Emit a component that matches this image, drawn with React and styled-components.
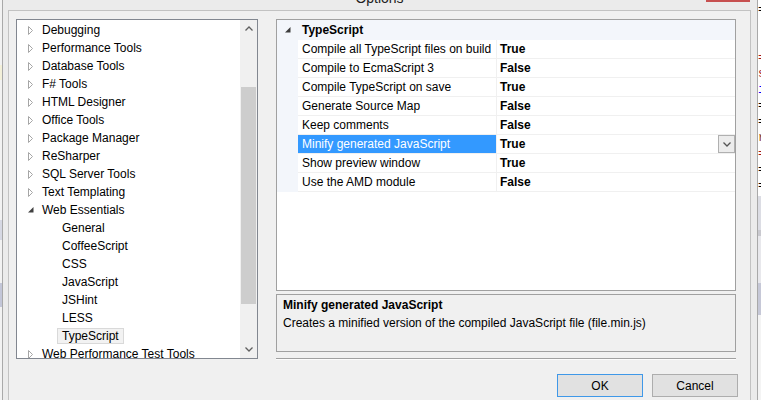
import React from "react";
import styled, { createGlobalStyle } from "styled-components";

const GlobalStyle = createGlobalStyle`
  html, body {
    margin: 0;
    padding: 0;
  }
  body {
    width: 761px;
    height: 400px;
    overflow: hidden;
    background: #f0f0f0;
    color: #000;
    font-family: "Liberation Sans", Arial, sans-serif;
    font-size: 12px;
  }
`;

const Screen = styled.div`
  display: flex;
  width: 761px;
  height: 400px;
  overflow: hidden;
`;

const Backdrop = styled.div`
  width: 2px;
  flex: none;
  background: linear-gradient(
    to bottom,
    #f2f2f2 0, #f2f2f2 65px,
    #f3f0d9 65px, #f3f0d9 80px,
    #f2f2f2 80px, #f2f2f2 220px,
    #d6d8e3 220px, #d6d8e3 240px,
    #f2f2f2 240px, #f2f2f2 283px,
    #c3c6d8 283px, #c3c6d8 307px,
    #f2f2f2 307px
  );
`;

const Editor = styled.div`
  width: 3px;
  flex: none;
  display: flex;
  flex-direction: column;
  padding-top: 2px;
  overflow: hidden;
  background: linear-gradient(
    to bottom,
    #ffffff 0, #ffffff 196px,
    #dcdde4 196px, #dcdde4 230px,
    #c9c9cf 230px, #c9c9cf 236px,
    #e8e8ec 236px, #e8e8ec 283px,
    #c6c8d7 283px, #c6c8d7 315px,
    #f4f4f4 315px
  );
`;

const CodeLine = styled.div`
  height: 16px;
  line-height: 16px;
  font-family: "Liberation Mono", monospace;
  font-size: 12px;
  white-space: pre;
  color: ${p => p.color || "#000"};
`;

const Window = styled.div`
  width: 756px;
  flex: none;
  box-sizing: border-box;
  display: flex;
  flex-direction: column;
  border-left: 1px solid #a9a9a9;
  border-right: 1px solid #a9a9a9;
  background: #ebebeb;
  padding: 0 6px 0 5px;
`;

const TitleBar = styled.div`
  height: 10px;
  flex: none;
  display: grid;
  grid-template-columns: 1fr auto 1fr;
  grid-template-rows: 10px;
  align-items: end;
  overflow: hidden;
`;

const Title = styled.div`
  grid-column: 2;
  font-size: 14px;
  line-height: 16px;
  margin-bottom: 4px;
  color: #222;
`;

const CloseButton = styled.div`
  grid-column: 3;
  justify-self: end;
  align-self: start;
  width: 44px;
  height: 2px;
  margin-right: 1px;
  background: #c75050;
`;

const Client = styled.div`
  flex: 1;
  display: flex;
  flex-direction: column;
  border: 1px solid #c2c2c2;
  border-bottom: none;
  background: #f0f0f0;
  padding: 8px 14px 0 7px;
  overflow: hidden;
`;

const Main = styled.div`
  display: flex;
  align-items: flex-start;
  gap: 18px;
`;

/* ---------- tree ---------- */

const Tree = styled.div`
  width: 242px;
  height: 340px;
  box-sizing: border-box;
  flex: none;
  display: flex;
  border: 1px solid #828790;
  background: #fff;
  overflow: hidden;
`;

const TreeList = styled.div`
  flex: 1;
  padding-top: 1px;
  overflow: hidden;
`;

const TreeRow = styled.div`
  display: flex;
  align-items: center;
  height: 18px;
  padding-left: ${p => 11 + p.level * 20}px;
  white-space: nowrap;
`;

const Expander = styled.span`
  width: 14px;
  flex: none;
  display: flex;
  align-items: center;
`;

const TreeLabel = styled.span`
  line-height: 14px;
  ${p =>
    p.selected &&
    `
    margin-left: -5px;
    padding: 0 4px;
    height: 16px;
    box-sizing: border-box;
    border: 1px solid #d9d9d9;
    background: #f2f2f2;
  `}
`;

const Scrollbar = styled.div`
  width: 17px;
  flex: none;
  display: flex;
  flex-direction: column;
  background: #f0f0f0;
`;

const ScrollButton = styled.div`
  height: 17px;
  flex: none;
  display: flex;
  align-items: center;
  justify-content: center;
`;

const ScrollTrack = styled.div`
  flex: 1;
  padding-top: 50px;
`;

const Thumb = styled.div`
  height: 217px;
  margin: 0 1px;
  background: #cdcdcd;
`;

/* ---------- property grid ---------- */

const RightColumn = styled.div`
  width: 460px;
  flex: none;
  display: flex;
  flex-direction: column;
`;

const Grid = styled.div`
  height: 272px;
  box-sizing: border-box;
  border: 1px solid #a0a0a0;
  background: #fff;
`;

const CategoryRow = styled.div`
  display: flex;
  align-items: center;
  height: 20px;
  background: #f3f6fb;
  font-weight: bold;
`;

const CategoryGlyph = styled.span`
  width: 21px;
  flex: none;
  box-sizing: border-box;
  padding-left: 8px;
  display: flex;
  align-items: center;
`;

const CategoryLabel = styled.span`
  padding-left: 4px;
`;

const PropRow = styled.div`
  display: grid;
  grid-template-columns: 21px 199px 1fr;
  height: 19px;
`;

const Gutter = styled.div`
  background: #f3f6fb;
`;

const NameCell = styled.div`
  display: flex;
  align-items: center;
  padding-left: 4px;
  white-space: nowrap;
  overflow: hidden;
  border-right: 1px solid #f0f0f0;
  border-bottom: 1px solid #f0f0f0;
  background: ${p => (p.selected ? "#3399ff" : "#fff")};
  color: ${p => (p.selected ? "#fff" : "#000")};
`;

const ValueCell = styled.div`
  display: flex;
  align-items: center;
  justify-content: space-between;
  padding-left: 3px;
  font-weight: bold;
  border-bottom: 1px solid #f0f0f0;
`;

const DropButton = styled.div`
  width: 17px;
  height: 18px;
  box-sizing: border-box;
  display: flex;
  align-items: center;
  justify-content: center;
  border: 1px solid #b0b0b0;
  background: #ececec;
`;

const Description = styled.div`
  margin-top: 3px;
  height: 58px;
  box-sizing: border-box;
  padding: 1px 6px;
  border: 1px solid #a0a0a0;
  background: #f0f0f0;
  line-height: 18px;
`;

const DescTitle = styled.div`
  font-weight: bold;
`;

const Separator = styled.div`
  margin-top: 6px;
  border-top: 1px solid #a0a0a0;
  border-bottom: 1px solid #fcfcfc;
`;

/* ---------- buttons ---------- */

const ButtonRow = styled.div`
  display: flex;
  justify-content: flex-end;
  gap: 9px;
  padding-top: 14px;
  margin-right: -2px;
`;

const Button = styled.div`
  width: 86px;
  height: 23px;
  box-sizing: border-box;
  display: flex;
  align-items: center;
  justify-content: center;
  border: 1px solid ${p => (p.primary ? "#3f98e8" : "#adadad")};
  background: #e1e1e1;
`;

/* ---------- icons ---------- */

const Collapsed = () => (
  <svg width="6" height="9" viewBox="0 0 6 9">
    <polygon points="0.5,0.5 4.5,4.5 0.5,8.5" fill="none" stroke="#a6a6a6" />
  </svg>
);

const Expanded = ({ color = "#404040" }) => (
  <svg width="6" height="6" viewBox="0 0 6 6">
    <polygon points="5.5,0 5.5,5.5 0,5.5" fill={color} />
  </svg>
);

const Chevron = ({ up, color = "#606060" }) => (
  <svg width="8" height="5" viewBox="0 0 8 5">
    <polyline
      points={up ? "0.5,4.5 4,1 7.5,4.5" : "0.5,0.5 4,4 7.5,0.5"}
      fill="none"
      stroke={color}
      strokeWidth="1.3"
    />
  </svg>
);

const treeItems = [
  { label: "Debugging", level: 0 },
  { label: "Performance Tools", level: 0 },
  { label: "Database Tools", level: 0 },
  { label: "F# Tools", level: 0 },
  { label: "HTML Designer", level: 0 },
  { label: "Office Tools", level: 0 },
  { label: "Package Manager", level: 0 },
  { label: "ReSharper", level: 0 },
  { label: "SQL Server Tools", level: 0 },
  { label: "Text Templating", level: 0 },
  { label: "Web Essentials", level: 0, open: true },
  { label: "General", level: 1 },
  { label: "CoffeeScript", level: 1 },
  { label: "CSS", level: 1 },
  { label: "JavaScript", level: 1 },
  { label: "JSHint", level: 1 },
  { label: "LESS", level: 1 },
  { label: "TypeScript", level: 1, selected: true },
  { label: "Web Performance Test Tools", level: 0 },
];

const props = [
  ["Compile all TypeScript files on build", "True"],
  ["Compile to EcmaScript 3", "False"],
  ["Compile TypeScript on save", "True"],
  ["Generate Source Map", "False"],
  ["Keep comments", "False"],
  ["Minify generated JavaScript", "True", true],
  ["Show preview window", "True"],
  ["Use the AMD module", "False"],
];

const code = [
  ["=", "#000"],
  ["", "#000"],
  ["", "#000"],
  ["=", "#a31515"],
  ["s", "#a31515"],
  ["i", "#0000ff"],
  ["=", "#000"],
  ["=", "#000"],
  ["r", "#8b4513"],
  ["=", "#a31515"],
  ["=", "#000"],
  ["=", "#000"],
];

const App = () => (
  <Screen>
    <GlobalStyle />
    <Backdrop />
    <Window>
      <TitleBar>
        <Title>Options</Title>
        <CloseButton />
      </TitleBar>
      <Client>
        <Main>
          <Tree>
            <TreeList>
              {treeItems.map(item => (
                <TreeRow key={item.label} level={item.level}>
                  <Expander>
                    {item.level === 0 && (item.open ? <Expanded /> : <Collapsed />)}
                  </Expander>
                  <TreeLabel selected={item.selected}>{item.label}</TreeLabel>
                </TreeRow>
              ))}
            </TreeList>
            <Scrollbar>
              <ScrollButton>
                <Chevron up />
              </ScrollButton>
              <ScrollTrack>
                <Thumb />
              </ScrollTrack>
              <ScrollButton>
                <Chevron />
              </ScrollButton>
            </Scrollbar>
          </Tree>

          <RightColumn>
            <Grid>
              <CategoryRow>
                <CategoryGlyph>
                  <Expanded color="#3c3c3c" />
                </CategoryGlyph>
                <CategoryLabel>TypeScript</CategoryLabel>
              </CategoryRow>
              {props.map(([name, value, selected]) => (
                <PropRow key={name}>
                  <Gutter />
                  <NameCell selected={selected}>{name}</NameCell>
                  <ValueCell>
                    {value}
                    {selected && (
                      <DropButton>
                        <Chevron color="#555" />
                      </DropButton>
                    )}
                  </ValueCell>
                </PropRow>
              ))}
            </Grid>
            <Description>
              <DescTitle>Minify generated JavaScript</DescTitle>
              <div>Creates a minified version of the compiled JavaScript file (file.min.js)</div>
            </Description>
            <Separator />
          </RightColumn>
        </Main>

        <ButtonRow>
          <Button primary>OK</Button>
          <Button>Cancel</Button>
        </ButtonRow>
      </Client>
    </Window>
    <Editor>
      {code.map(([ch, color], i) => (
        <CodeLine key={i} color={color}>
          {ch || " "}
        </CodeLine>
      ))}
    </Editor>
  </Screen>
);

export default App;
